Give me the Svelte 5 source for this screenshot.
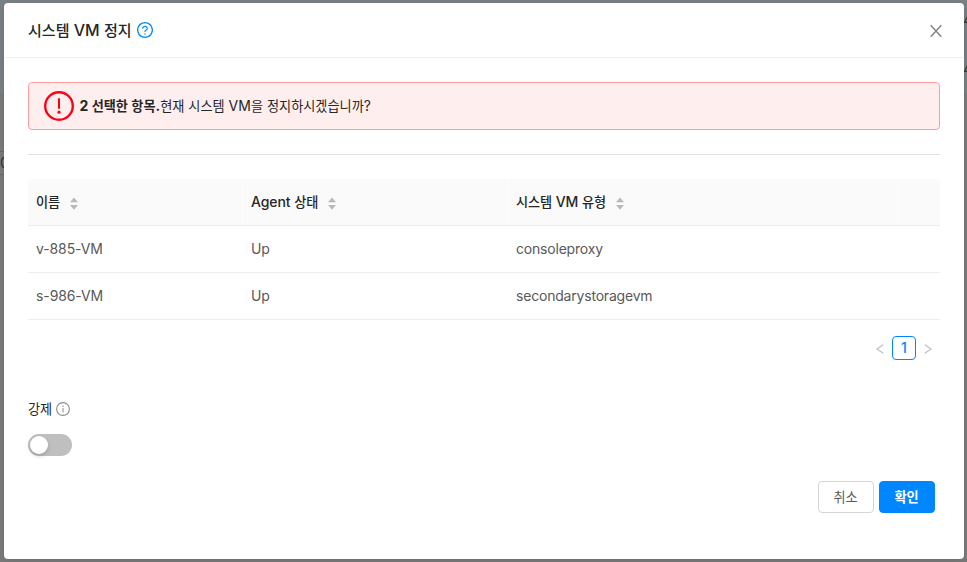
<script>
  const columns = [
    { label: '이름', width: 215 },
    { label: 'Agent 상태', width: 265 },
    { label: '시스템 VM 유형', width: 390 },
    { label: '', width: 42 }
  ];
  const rows = [
    ['v-885-VM', 'Up', 'consoleproxy', ''],
    ['s-986-VM', 'Up', 'secondarystoragevm', '']
  ];
  let forced = $state(false);

  // Splits a label into Hangul and non-Hangul runs so each gets its own optical size.
  const runs = (text) => text.match(/[가-힣]+|[^가-힣]+/g) ?? [];
  const isHangul = (run) => /^[가-힣]/.test(run);
</script>

{#snippet mixed(text)}{#each runs(text) as run}<span class="run" class:ko={isHangul(run)}>{run}</span>{/each}{/snippet}

<div class="backdrop">
  <div class="page-top"></div>
  <span class="peek first">4</span>
  <span class="peek second">4</span>
  <span class="peek-box">0</span>

  <div class="modal" role="dialog" aria-modal="true">
    <header>
      <h1>{@render mixed('시스템 VM 정지')}</h1>
      <svg class="help" viewBox="64 64 896 896" width="16" height="16" fill="currentColor">
        <path d="M512 64C264.6 64 64 264.6 64 512s200.6 448 448 448 448-200.6 448-448S759.4 64 512 64zm0 820c-205.4 0-372-166.6-372-372s166.6-372 372-372 372 166.6 372 372-166.6 372-372 372z" />
        <path d="M623.6 316.7C593.6 290.4 554 276 512 276s-81.6 14.5-111.6 40.7C369.2 344 352 380.7 352 420v7.600c0 4.400 3.600 8 8 8h48c4.400 0 8-3.600 8-8V420c0-44.100 43.100-80 96-80s96 35.900 96 80c0 31.100-22 59.600-56.100 72.700-21.200 8.100-39.200 22.300-52.100 40.900-13.100 19-19.900 41.800-19.900 64.900V620c0 4.400 3.600 8 8 8h48c4.400 0 8-3.600 8-8v-22.700a48.300 48.300 0 0 1 30.900-44.800c59-22.700 97.100-74.700 97.100-132.500.1-39.300-17.100-76-48.300-103.300zM472 732a40 40 0 1 0 80 0 40 40 0 1 0-80 0z" />
      </svg>
      <button class="close" aria-label="닫기">
        <svg viewBox="0 0 14 14" width="14" height="14" fill="none" stroke="currentColor" stroke-width="1.400">
          <path d="M1.700 1.200 12.300 12.800M12.300 1.200 1.700 12.800" />
        </svg>
      </button>
    </header>

    <main>
      <div class="alert">
        <svg viewBox="0 0 30 30" width="30" height="30">
          <circle cx="15" cy="15" r="13.800" fill="none" stroke="#ff0018" stroke-width="2.400" />
          <path d="M14 7.200h2v10.600h-2z" fill="#ff0018" />
          <circle cx="15" cy="21.200" r="1.600" fill="#ff0018" />
        </svg>
        <p><b>{@render mixed('2 선택한 항목.')}</b><span class="question">{@render mixed('현재 시스템 VM을 정지하시겠습니까?')}</span></p>
      </div>

      <hr />

      <table>
        <colgroup>
          {#each columns as col}
            <col style="width: {col.width}px" />
          {/each}
        </colgroup>
        <thead>
          <tr>
            {#each columns as col}
              <th>
                {#if col.label}
                  <div class="head-cell">
                    <span class="label">{@render mixed(col.label)}</span>
                    <svg viewBox="0 0 8 13" width="8" height="13" fill="#b9b9b9">
                      <path d="M4 0.500 8 5.200H0zM0 8h8L4 12.700z" />
                    </svg>
                  </div>
                {/if}
              </th>
            {/each}
          </tr>
        </thead>
        <tbody>
          {#each rows as row}
            <tr>
              {#each row as cell}
                <td>{cell}</td>
              {/each}
            </tr>
          {/each}
        </tbody>
      </table>

      <nav>
        <svg viewBox="0 0 8 10" width="8" height="10"><path d="M7.200 0.800 1 5l6.200 4.200" /></svg>
        <span class="page">1</span>
        <svg viewBox="0 0 8 10" width="8" height="10"><path d="M0.800 0.800 7 5 0.800 9.200" /></svg>
      </nav>

      <div class="field">
        <span class="field-label">{@render mixed('강제')}</span>
        <svg viewBox="0 0 14 14" width="14" height="14">
          <circle cx="7" cy="7" r="6.400" fill="none" stroke="#8c8c8c" stroke-width="1.100" />
          <path d="M6.500 6h1v4.500h-1z" fill="#8c8c8c" />
          <circle cx="7" cy="4.200" r="0.750" fill="#8c8c8c" />
        </svg>
      </div>
      <button
        class="switch"
        class:on={forced}
        role="switch"
        aria-checked={forced}
        aria-label="강제"
        onclick={() => (forced = !forced)}
      ><i></i></button>

      <footer>
        <button class="btn">{@render mixed('취소')}</button>
        <button class="btn primary">{@render mixed('확인')}</button>
      </footer>
    </main>
  </div>
</div>

<style>
  :global(body) {
    margin: 0;
    overflow: hidden;
  }
  * {
    box-sizing: border-box;
  }
  .backdrop {
    position: relative;
    width: 967px;
    height: 562px;
    padding: 3px 3px 3px 4px;
    overflow: hidden;
    background: #7b7b7b;
    font-family: Inter, 'Noto Sans CJK KR', sans-serif;
    font-size: 14px;
    color: #262626;
  }
  .run {
    white-space: pre;
  }
  .ko {
    font-size: 0.94em;
    vertical-align: 0.5px;
    line-height: 1;
  }
  .page-top {
    position: absolute;
    inset: 0 0 auto 0;
    height: 94px;
    background: #788185;
  }
  .peek,
  .peek-box {
    position: absolute;
    line-height: 14px;
    color: #333;
  }
  .peek {
    left: 963px;
  }
  .first {
    top: 13px;
  }
  .second {
    top: 62px;
  }
  .peek-box {
    left: -10px;
    top: 151px;
    width: 20px;
    height: 24px;
    padding-left: 9px;
    line-height: 22px;
    border: 1px solid #696969;
  }
  .modal {
    position: relative;
    height: 556px;
    border-radius: 4px;
    background: #fff;
    box-shadow: 0 2px 8px rgba(0, 0, 0, 0.12);
  }
  header {
    display: flex;
    align-items: center;
    height: 55px;
    padding: 0 21px 0 24px;
    border-bottom: 1px solid #f0f0f0;
  }
  h1 {
    width: 103px;
    margin: 0;
    font-size: 16px;
    font-weight: 500;
    line-height: 22px;
    white-space: nowrap;
  }
  .help {
    margin-left: 6px;
    color: #0087ff;
  }
  .close {
    display: flex;
    margin-left: auto;
    margin-top: 2px;
    padding: 0;
    border: 0;
    background: none;
    color: #808080;
  }
  main {
    padding: 24px;
  }
  .alert {
    display: flex;
    align-items: center;
    height: 48px;
    padding-left: 15px;
    border: 1px solid #ff9c9c;
    border-radius: 4px;
    background: #ffeeee;
  }
  .alert p {
    margin: 0 0 0 5.500px;
    line-height: 22px;
    white-space: nowrap;
  }
  .alert b {
    font-weight: 700;
  }
  hr {
    height: 1px;
    margin: 24px 0;
    border: 0;
    background: #e3e3e3;
  }
  table {
    width: 912px;
    table-layout: fixed;
    border-collapse: separate;
    border-spacing: 0;
  }
  th,
  td {
    height: 47px;
    padding: 0 8px;
    border-bottom: 1px solid #ececec;
    text-align: left;
    font-weight: 400;
    line-height: 22px;
    letter-spacing: -0.2px;
    color: #595959;
    white-space: nowrap;
  }
  td:first-child {
    letter-spacing: -0.1px;
  }
  th {
    border-right: 1px solid #fdfdfd;
    background: #fafafa;
    font-weight: 500;
    letter-spacing: -0.08px;
    color: #262626;
  }
  th:first-child {
    border-top-left-radius: 4px;
  }
  th:last-child {
    border-right: 0;
    border-top-right-radius: 4px;
  }
  .head-cell {
    display: flex;
    align-items: center;
    gap: 10px;
  }
  .head-cell svg {
    margin-top: 3px;
  }
  nav {
    display: flex;
    align-items: center;
    justify-content: flex-end;
    gap: 8px;
    height: 24px;
    margin-top: 16px;
    padding-right: 8px;
  }
  nav svg {
    margin-top: 2px;
  }
  nav path {
    fill: none;
    stroke: #bfbfbf;
    stroke-width: 1.2;
  }
  .page {
    width: 24px;
    height: 24px;
    border: 1px solid #0087ff;
    border-radius: 4px;
    font-weight: 500;
    line-height: 22px;
    text-align: center;
    color: #0087ff;
  }
  .field {
    display: flex;
    align-items: center;
    gap: 4px;
    height: 22px;
    margin-top: 38px;
  }
  .field-label {
    width: 24px;
    line-height: 20px;
    margin-top: -1px;
    white-space: nowrap;
  }
  .switch {
    display: block;
    width: 44px;
    height: 22px;
    margin-top: 14px;
    padding: 2px;
    border: 0;
    border-radius: 11px;
    background: #bfbfbf;
  }
  .switch i {
    display: block;
    width: 18px;
    height: 18px;
    border-radius: 50%;
    background: #fff;
    box-shadow: 0 2px 4px rgba(0, 35, 11, 0.2);
  }
  .switch.on {
    background: #0087ff;
  }
  .switch.on i {
    margin-left: 22px;
  }
  footer {
    display: flex;
    justify-content: flex-end;
    gap: 5px;
    margin-top: 25px;
    padding-right: 5px;
  }
  .btn {
    width: 56px;
    height: 32px;
    padding: 0 1px 0 0;
    border: 1px solid #d5d5d5;
    border-radius: 4px;
    background: #fff;
    font: 400 14px/28px Inter, 'Noto Sans CJK KR', sans-serif;
    color: #595959;
  }
  .primary {
    border-color: #0087ff;
    background: #0087ff;
    font-weight: 700;
    color: #fff;
  }
</style>
